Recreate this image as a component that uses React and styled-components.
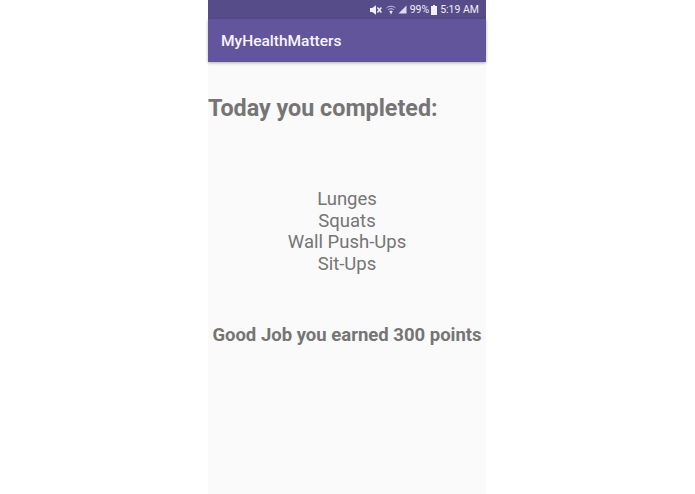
import React from "react";
import styled, { createGlobalStyle } from "styled-components";

const GlobalStyle = createGlobalStyle`
  html, body {
    margin: 0;
    padding: 0;
    background: #ffffff;
  }
  body {
    font-family: Roboto, "Liberation Sans", sans-serif;
  }
`;

export default function App() {
  return (
    <>
      <GlobalStyle />
      <Page>
        <Phone>
          <StatusBar>
            <MuteIcon />
            <WifiIcon />
            <SignalIcon />
            <StatusText $left={3}>99%</StatusText>
            <BatteryIcon />
            <StatusText $left={3}>5:19 AM</StatusText>
          </StatusBar>
          <AppBar>
            <AppTitle>MyHealthMatters</AppTitle>
          </AppBar>
          <Content>
            <Heading>Today you completed:</Heading>
            <ExerciseList>
              <Exercise>Lunges</Exercise>
              <Exercise>Squats</Exercise>
              <Exercise>Wall Push-Ups</Exercise>
              <Exercise>Sit-Ups</Exercise>
            </ExerciseList>
            <Points>Good Job you earned 300 points</Points>
          </Content>
        </Phone>
      </Page>
    </>
  );
}

const MuteIcon = () => (
  <svg width="12" height="10" viewBox="0 0 12 10" fill="#f1eff7">
    <path d="M0 3h2.2L6 .2v9.6L2.2 7H0z" />
    <path d="M7.4 2.6l4 4.8M11.4 2.6l-4 4.8" stroke="#f1eff7" strokeWidth="1.5" fill="none" />
  </svg>
);

const WifiIcon = () => (
  <svg width="10" height="10" viewBox="0 0 10 10" fill="none" stroke="#c9c5de" strokeWidth="1" style={{ marginLeft: 4 }}>
    <path d="M.6 2.8C3 .8 7 .8 9.4 2.8M2.2 4.6C3.8 3.4 6.2 3.4 7.8 4.6" />
    <path d="M5 9.6L3.3 6.2c1-.6 2.4-.6 3.4 0z" fill="#e6e3f0" stroke="none" />
  </svg>
);

const SignalIcon = () => (
  <svg width="9" height="9" viewBox="0 0 9 9" fill="#dedbec" style={{ marginLeft: 2 }}>
    <path d="M8.5.5v8H.5z" />
  </svg>
);

const BatteryIcon = () => (
  <svg width="6" height="10" viewBox="0 0 6 10" fill="#f1eff7" style={{ marginLeft: 2 }}>
    <path d="M2 0h2v1h2v9H0V1h2z" />
  </svg>
);

const Page = styled.div`
  width: 695px;
  height: 494px;
  display: flex;
  justify-content: center;
  overflow: hidden;
`;

const Phone = styled.div`
  width: 278px;
  height: 494px;
  margin-right: 1px;
  display: flex;
  flex-direction: column;
  background: #fafafa;
`;

const StatusBar = styled.div`
  height: 19px;
  flex: none;
  padding-right: 7px;
  display: flex;
  align-items: center;
  justify-content: flex-end;
  background: #574c8a;
`;

const StatusText = styled.span`
  margin-left: ${(p) => p.$left}px;
  font-size: 10.5px;
  color: #f1eff7;
`;

const AppBar = styled.div`
  height: 43px;
  flex: none;
  padding-left: 13px;
  display: flex;
  align-items: center;
  background: #62559c;
  box-shadow: 0 1px 3px rgba(0, 0, 0, 0.3);
`;

const AppTitle = styled.div`
  font-size: 15.5px;
  font-weight: 500;
  color: #f6f5fa;
`;

const Content = styled.div`
  flex: 1;
  display: flex;
  flex-direction: column;
  color: #757575;
`;

const Heading = styled.h1`
  margin: 31px 0 0;
  font-size: 23.3px;
  line-height: 30px;
  font-weight: 700;
`;

const ExerciseList = styled.div`
  margin-top: 66px;
  display: flex;
  flex-direction: column;
  align-items: center;
`;

const Exercise = styled.div`
  font-size: 18.5px;
  line-height: 21.6px;
`;

const Points = styled.div`
  margin-top: 48px;
  font-size: 18.5px;
  line-height: 24px;
  font-weight: 700;
  text-align: center;
`;
